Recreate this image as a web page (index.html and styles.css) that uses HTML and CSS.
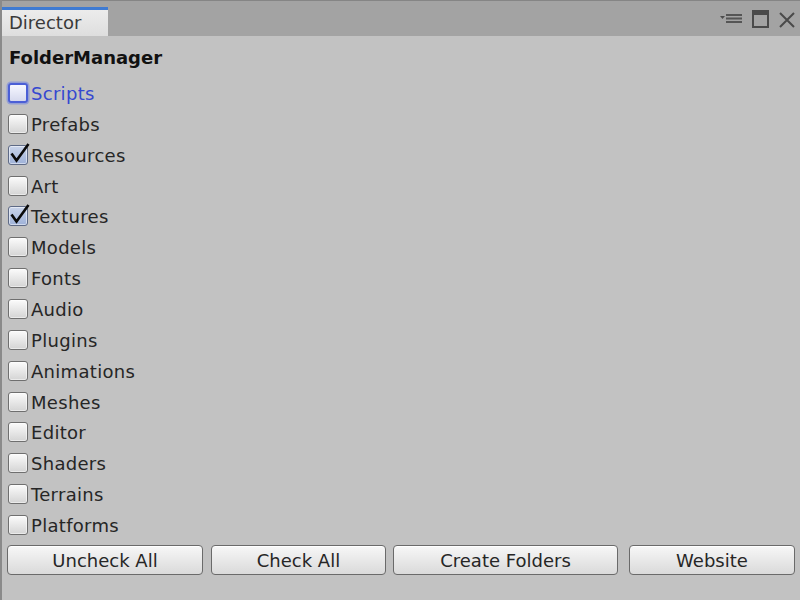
FILE: index.html
```html
<!DOCTYPE html>
<html>
<head>
<meta charset="utf-8">
<link rel="stylesheet" href="styles.css">
</head>
<body>
<div class="window">
  <div class="titlebar">
    <div class="tab">Director</div>
    <div class="tools">
      <svg class="ico-menu" width="24" height="12" viewBox="0 0 24 12">
        <path d="M1 3 L6 3 L3.5 6 Z" fill="#4d4d4d"/>
        <rect x="7" y="1" width="16" height="2" fill="#555"/>
        <rect x="7" y="4.5" width="16" height="2" fill="#555"/>
        <rect x="7" y="8" width="16" height="2" fill="#555"/>
      </svg>
      <svg class="ico-max" width="17" height="18" viewBox="0 0 17 18">
        <rect x="1" y="1" width="15" height="16" fill="none" stroke="#4a4a4a" stroke-width="2"/>
        <rect x="1" y="1" width="15" height="4" fill="#4a4a4a"/>
      </svg>
      <svg class="ico-close" width="18" height="16" viewBox="0 0 18 16">
        <path d="M2 1 L16 15 M16 1 L2 15" stroke="#4a4a4a" stroke-width="2" fill="none"/>
      </svg>
    </div>
  </div>
  <div class="content">
    <div class="heading">FolderManager</div>
    <ul class="list">
      <li class="row focused"><span class="box"></span><span class="label">Scripts</span></li>
      <li class="row"><span class="box"></span><span class="label">Prefabs</span></li>
      <li class="row checked"><span class="box"><svg class="tick" width="22" height="22" viewBox="0 0 22 22"><path d="M2.5 11.5 L7.5 18.5 L19.5 2" stroke="#0a0a0a" stroke-width="2.6" fill="none" stroke-linejoin="miter"/></svg></span><span class="label">Resources</span></li>
      <li class="row"><span class="box"></span><span class="label">Art</span></li>
      <li class="row checked"><span class="box"><svg class="tick" width="22" height="22" viewBox="0 0 22 22"><path d="M2.5 11.5 L7.5 18.5 L19.5 2" stroke="#0a0a0a" stroke-width="2.6" fill="none" stroke-linejoin="miter"/></svg></span><span class="label">Textures</span></li>
      <li class="row"><span class="box"></span><span class="label">Models</span></li>
      <li class="row"><span class="box"></span><span class="label">Fonts</span></li>
      <li class="row"><span class="box"></span><span class="label">Audio</span></li>
      <li class="row"><span class="box"></span><span class="label">Plugins</span></li>
      <li class="row"><span class="box"></span><span class="label">Animations</span></li>
      <li class="row"><span class="box"></span><span class="label">Meshes</span></li>
      <li class="row"><span class="box"></span><span class="label">Editor</span></li>
      <li class="row"><span class="box"></span><span class="label">Shaders</span></li>
      <li class="row"><span class="box"></span><span class="label">Terrains</span></li>
      <li class="row"><span class="box"></span><span class="label">Platforms</span></li>
    </ul>
    <div class="buttons">
      <button class="btn btn-uncheck">Uncheck All</button>
      <button class="btn btn-check">Check All</button>
      <button class="btn btn-create">Create Folders</button>
      <button class="btn btn-web">Website</button>
    </div>
  </div>
</div>
</body>
</html>
```

FILE: styles.css
```css
html, body {
  margin: 0;
  padding: 0;
}
body {
  width: 800px;
  height: 600px;
  overflow: hidden;
  background: #c2c2c2;
  font-family: "DejaVu Sans", Verdana, sans-serif;
  font-size: 18px;
  color: #262626;
}
.window {
  height: 600px;
  border-left: 2px solid #8a8a8a;
  box-sizing: border-box;
  display: flex;
  flex-direction: column;
}
.titlebar {
  height: 36px;
  background: #a3a3a3;
  border-top: 1px solid #858585;
  box-sizing: border-box;
  display: flex;
  align-items: flex-end;
  justify-content: space-between;
}
.tab {
  width: 106px;
  height: 29px;
  box-sizing: border-box;
  border-top: 3px solid #3f7bd2;
  background: linear-gradient(#ececec, #dedede);
  color: #3a3a3a;
  padding-left: 7px;
  line-height: 25px;
  font-size: 18px;
}
.tools {
  align-self: stretch;
  display: flex;
  align-items: flex-start;
  padding-right: 4px;
}
.ico-menu {
  margin-top: 12px;
  margin-right: 9px;
}
.ico-max {
  margin-top: 9px;
  margin-right: 9px;
}
.ico-close {
  margin-top: 11px;
}
.content {
  flex: 1;
  padding: 8px 0 0 6px;
}
.heading {
  font-weight: bold;
  line-height: 28px;
  color: #111;
  padding-left: 1px;
}
.list {
  list-style: none;
  margin: 5.5px 0 0 0;
  padding: 0;
}
.row {
  height: 30.86px;
  display: flex;
  align-items: center;
}
.box {
  position: relative;
  width: 20px;
  height: 20px;
  box-sizing: border-box;
  border: 1px solid #6f6f6f;
  border-radius: 3px;
  background: linear-gradient(#fbfbfb, #d4d4d4);
  box-shadow: inset 0 0 0 1px rgba(255,255,255,0.5);
  flex: none;
}
.label {
  margin-left: 3px;
  line-height: 22px;
  padding-top: 2px;
  letter-spacing: 0.3px;
}
.focused .box {
  border: 2px solid #4b5fd6;
  box-shadow: 0 0 0 1.5px rgba(110,130,230,0.55);
  background: linear-gradient(#f6f7ff, #d6d9ee);
}
.focused .label {
  color: #3548d0;
}
.checked .box {
  background: linear-gradient(#c9d4ea, #9fb2d8);
  border-color: #5e6a86;
}
.tick {
  position: absolute;
  left: 0;
  top: -4px;
}
.buttons {
  display: flex;
  margin-top: 4.5px;
  margin-left: -1px;
}
.btn {
  height: 30px;
  box-sizing: border-box;
  border: 1px solid #6a6a6a;
  border-radius: 4px;
  background: linear-gradient(#f7f7f7, #dadada);
  box-shadow: inset 0 1px 0 #ffffff;
  font-family: "DejaVu Sans", Verdana, sans-serif;
  font-size: 18px;
  color: #262626;
  padding: 2px 0 0 0;
  line-height: 26px;
}
.btn-uncheck { width: 196px; }
.btn-check { width: 175px; margin-left: 8px; }
.btn-create { width: 225px; margin-left: 7px; }
.btn-web { width: 166px; margin-left: 11px; }
```
